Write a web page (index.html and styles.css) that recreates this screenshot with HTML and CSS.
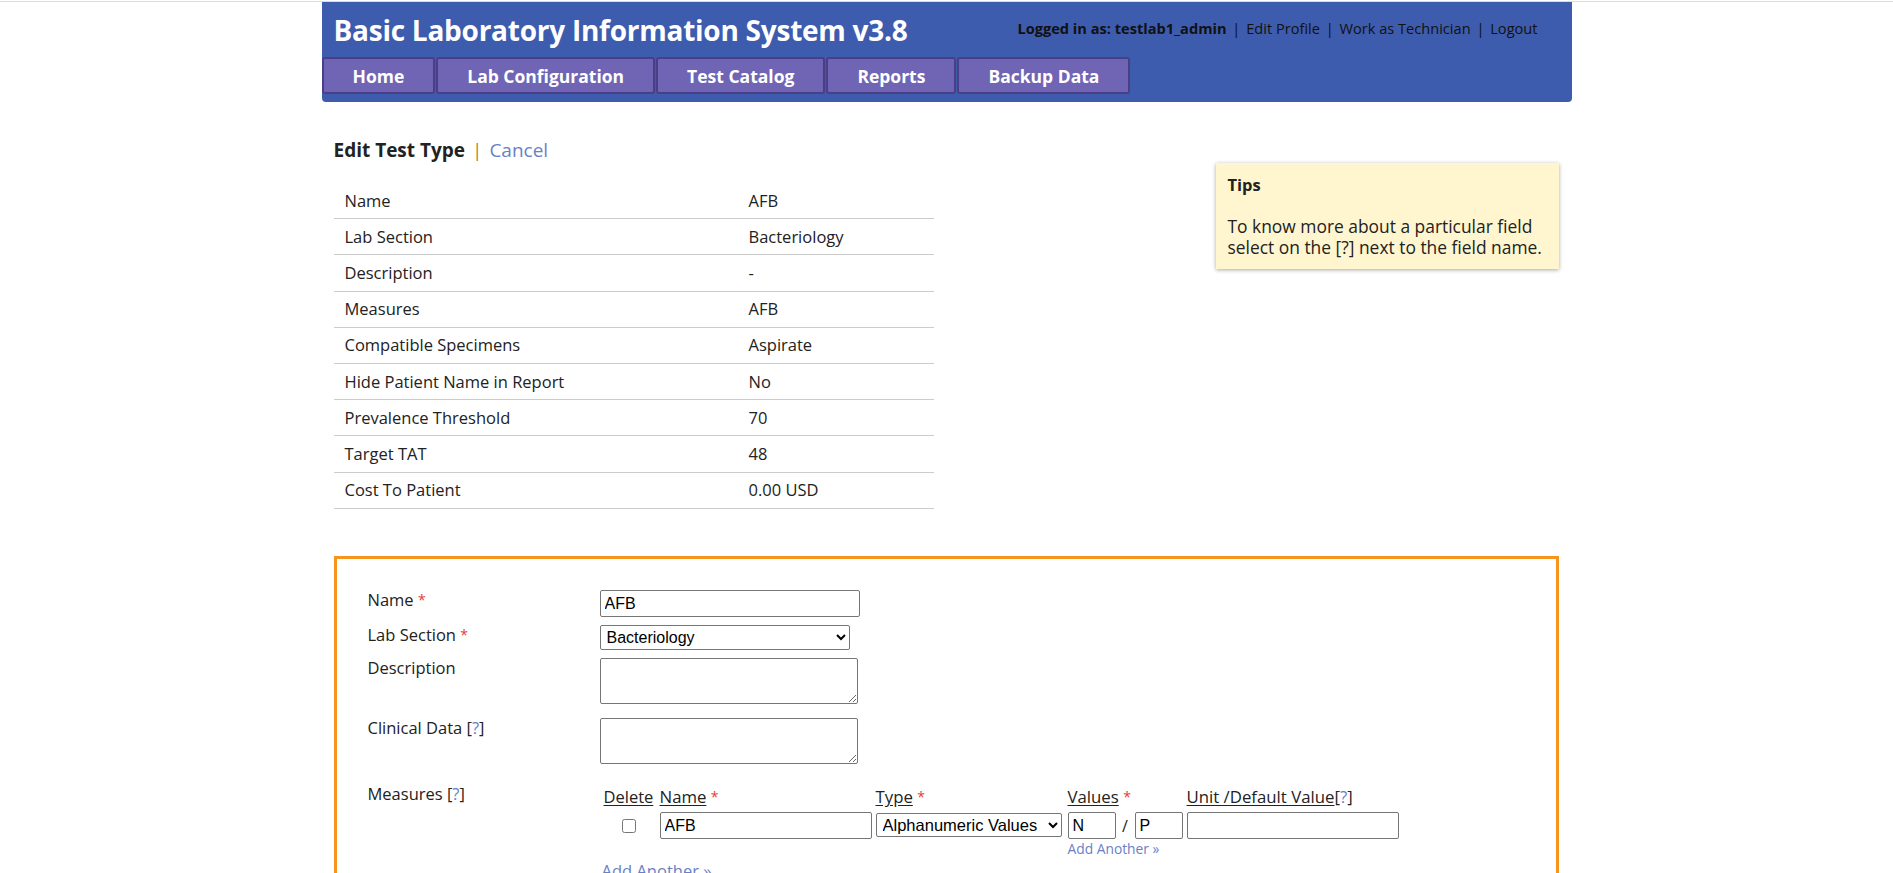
FILE: index.html
```html
<!DOCTYPE html>
<html lang="en">
<head>
<meta charset="utf-8">
<title>Edit Test Type - BLIS</title>
<link rel="stylesheet" href="styles.css">
</head>
<body>
<div class="topline"></div>
<div class="page">
  <header class="header">
    <div class="header-top">
      <h1 class="title">Basic Laboratory Information System v3.8</h1>
      <div class="userbar"><b>Logged in as: testlab1_admin</b> <span class="bar">|</span> <a class="ulink" href="#">Edit Profile</a> <span class="bar">|</span> <a class="ulink" href="#">Work as Technician</a> <span class="bar">|</span> <a class="ulink" href="#">Logout</a></div>
    </div>
    <nav class="nav">
      <a class="nav-item" href="#">Home</a>
      <a class="nav-item" href="#">Lab Configuration</a>
      <a class="nav-item" href="#">Test Catalog</a>
      <a class="nav-item" href="#">Reports</a>
      <a class="nav-item" href="#">Backup Data</a>
    </nav>
  </header>

  <main class="content">
    <div class="top-row">
      <section class="summary">
        <h2 class="page-title">Edit Test Type <span class="sep">|</span> <a class="link cancel" href="#">Cancel</a></h2>
        <table class="info">
          <tr><td class="k">Name</td><td>AFB</td></tr>
          <tr><td class="k">Lab Section</td><td>Bacteriology</td></tr>
          <tr><td class="k">Description</td><td>-</td></tr>
          <tr><td class="k">Measures</td><td>AFB</td></tr>
          <tr><td class="k">Compatible Specimens</td><td>Aspirate</td></tr>
          <tr><td class="k">Hide Patient Name in Report</td><td>No</td></tr>
          <tr><td class="k">Prevalence Threshold</td><td>70</td></tr>
          <tr><td class="k">Target TAT</td><td>48</td></tr>
          <tr><td class="k">Cost To Patient</td><td>0.00 USD</td></tr>
        </table>
      </section>
      <aside class="tips">
        <div class="tips-title">Tips</div>
        <p class="tips-text">To know more about a particular field<br>select on the [?] next to the field name.</p>
      </aside>
    </div>

    <form class="form-box">
      <div class="form-row gap8">
        <label class="flabel">Name <span class="req">*</span></label>
        <div><input class="inp w260" type="text" value="AFB"></div>
      </div>
      <div class="form-row gap8">
        <label class="flabel">Lab Section <span class="req">*</span></label>
        <div><select class="sel w250"><option>Bacteriology</option></select></div>
      </div>
      <div class="form-row gap13">
        <label class="flabel">Description</label>
        <div><textarea class="ta"></textarea></div>
      </div>
      <div class="form-row gap20">
        <label class="flabel">Clinical Data <span class="q">[<a class="link" href="#">?</a>]</span></label>
        <div><textarea class="ta"></textarea></div>
      </div>
      <div class="form-row">
        <label class="flabel">Measures <span class="q">[<a class="link" href="#">?</a>]</span></label>
        <div class="measures">
          <div class="mgrid">
            <div class="mh first"><u>Delete</u></div>
            <div class="mh"><u>Name</u> <span class="req">*</span></div>
            <div class="mh"><u>Type</u> <span class="req">*</span></div>
            <div class="mh"><u>Values</u> <span class="req">*</span></div>
            <div class="mh"><u>Unit /Default Value</u><span class="q">[<a class="link" href="#">?</a>]</span></div>

            <div class="mc cb-cell"><input class="cb" type="checkbox"></div>
            <div class="mc"><input class="inp w212" type="text" value="AFB"></div>
            <div class="mc"><select class="sel w186 mrow"><option>Alphanumeric Values</option></select></div>
            <div class="mc vals">
              <div class="vals-row"><input class="inp w48" type="text" value="N"><span class="slash">/</span><input class="inp w48" type="text" value="P"></div>
              <a class="link small" href="#">Add Another &raquo;</a>
            </div>
            <div class="mc"><input class="inp w212" type="text" value=""></div>
          </div>
          <a class="link add-main" href="#">Add Another &raquo;</a>
        </div>
      </div>
    </form>
  </main>
</div>
</body>
</html>
```

FILE: styles.css
```css
html, body {
  margin: 0;
  padding: 0;
  background: #ffffff;
}

body {
  font-family: "Open Sans", "Liberation Sans", sans-serif;
  font-size: 16.5px;
  color: #222222;
}

.topline {
  height: 1px;
  margin-top: 1px;
  background: #dcdcdc;
}

.page {
  width: 1250px;
  margin: 0 auto;
}

/* ---------- header ---------- */
.header {
  background: #3e5cad;
  border-radius: 0 0 4px 4px;
  padding-bottom: 8px;
}

.header-top {
  height: 55px;
  display: flex;
  justify-content: space-between;
  align-items: flex-start;
}

.title {
  margin: 0;
  padding: 10px 0 0 12px;
  font-family: "Open Sans", Lato, sans-serif;
  font-weight: 700;
  font-size: 28px;
  line-height: 36px;
  letter-spacing: -0.25px;
  color: #ffffff;
}

.userbar {
  padding: 16px 34px 0 0;
  font-size: 14.6px;
  line-height: 20px;
  color: #111111;
}

.userbar b {
  font-weight: 700;
}

.ulink {
  color: #111111;
  text-decoration: none;
}

.bar {
  padding: 0 2px;
}

.nav {
  display: flex;
  gap: 1px;
}

.nav-item {
  display: block;
  box-sizing: content-box;
  height: 32px;
  padding: 1px 29px 0;
  line-height: 32px;
  border: 2px solid #4a3f86;
  border-radius: 3px;
  background: #7065b4;
  color: #ffffff;
  font-weight: 700;
  font-size: 17.5px;
  text-decoration: none;
}

/* ---------- content ---------- */
.content {
  padding: 0 13px 0 12px;
}

.top-row {
  display: flex;
  justify-content: space-between;
  align-items: flex-start;
}

.summary {
  width: 600px;
}

.page-title {
  margin: 36px 0 21px;
  font-size: 19px;
  line-height: 24px;
  font-weight: 700;
  color: #222222;
}

.sep {
  color: #b0862a;
  font-weight: 400;
  padding: 0 2px;
}

.link {
  color: #6a7fc5;
  text-decoration: none;
}

.cancel {
  font-weight: 400;
}

.info {
  width: 600px;
  border-collapse: collapse;
}

.info td {
  height: 35.2px;
  padding: 0 0 0 11px;
  border-bottom: 1px solid #cccccc;
  line-height: 20px;
}

.info td.k {
  width: 393px;
}

.tips {
  width: 343px;
  box-sizing: border-box;
  margin-top: 61px;
  padding: 12px;
  background: #fff6cf;
  box-shadow: 0 1px 4px rgba(0, 0, 0, 0.35);
  font-size: 17.4px;
  line-height: 20.5px;
}

.tips-title {
  font-weight: 700;
  font-size: 16.5px;
  margin-bottom: 20.5px;
}

.tips-text {
  margin: 0;
  white-space: nowrap;
}

/* ---------- form ---------- */
.form-box {
  margin: 47.5px 0 0;
  border: 3px solid #f7941d;
  border-bottom: none;
  padding: 31px 30px 40px 31px;
  height: 400px;
}

.form-row {
  display: grid;
  grid-template-columns: 232px 1fr;
  align-items: start;
}

.gap8 { margin-bottom: 8px; }
.gap13 { margin-bottom: 14px; }
.gap20 { margin-bottom: 20px; }

.flabel {
  display: block;
  line-height: 20px;
}

.req {
  color: #e53b35;
  font-size: 14px;
  vertical-align: top;
}

.inp, .sel, .ta {
  display: block;
  box-sizing: border-box;
  margin: 0;
  font-family: "Liberation Sans", Arial, sans-serif;
  font-size: 16px;
  color: #000000;
  border: 1px solid #767676;
  border-radius: 2px;
  background: #ffffff;
}

.inp {
  height: 27px;
  padding: 1px 4px;
}

.sel {
  height: 25px;
  padding: 0 2px;
}

.ta {
  width: 258px;
  height: 46px;
  padding: 2px;
}

.w260 { width: 260px; }
.w250 { width: 250px; }
.w212 { width: 212px; }
.w186 { width: 186px; }
.w48 { width: 48px; }

.measures {
  padding-top: 3px;
  margin-left: 2px;
}

.mgrid {
  display: grid;
  grid-template-columns: 58px 216px 192px 119px 212px;
  grid-template-rows: 20px auto;
  row-gap: 5px;
  align-items: start;
}

.mh {
  line-height: 20px;
  font-size: 16.8px;
  white-space: nowrap;
}

.mh.first {
  padding-left: 2px;
  font-size: 16.5px;
}

.mh u {
  text-underline-offset: 2px;
}

.cb-cell {
  height: 27px;
  display: flex;
  align-items: center;
}

.cb {
  width: 14px;
  height: 14px;
  margin: 0 0 0 20px;
}

.mrow {
  height: 24px;
  margin-top: 1px !important;
  font-size: 16.5px;
}

.vals-row {
  display: flex;
  align-items: center;
}

.slash {
  width: 19px;
  text-align: center;
  font-size: 16px;
}

.small {
  display: block;
  font-size: 13.8px;
  line-height: 20px;
}

.add-main {
  display: block;
  margin-top: 2px;
  font-size: 16.5px;
  line-height: 20px;
}
```
